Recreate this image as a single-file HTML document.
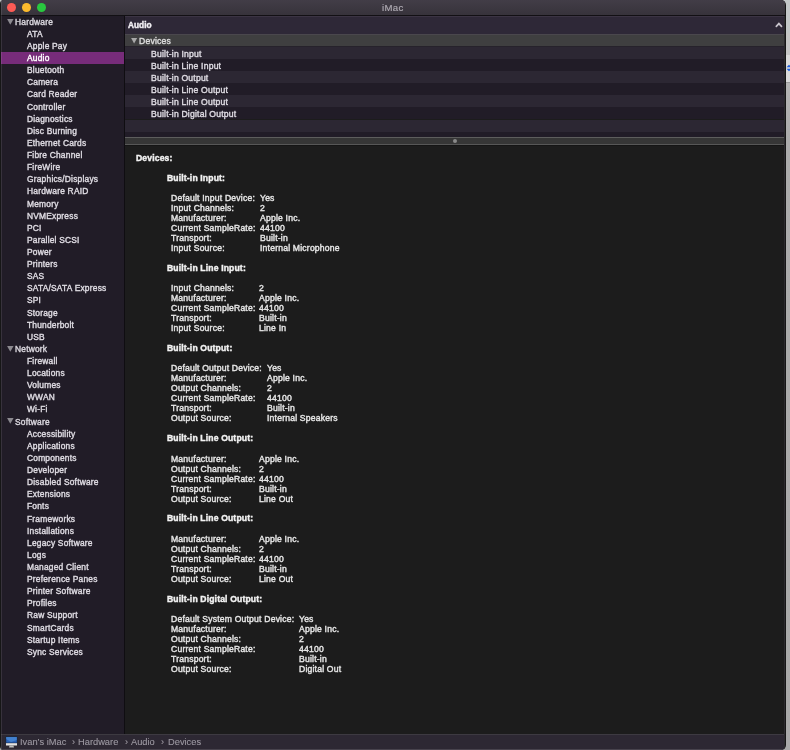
<!DOCTYPE html><html><head><meta charset="utf-8"><style>
*{margin:0;padding:0;box-sizing:border-box}
html,body{width:790px;height:750px;overflow:hidden;background:#b3b3b3;font-family:"Liberation Sans",sans-serif}
.t{position:absolute;white-space:nowrap;will-change:transform;-webkit-text-stroke:0.4px currentColor}
#bg{position:absolute;left:0;top:0;width:790px;height:750px;background:linear-gradient(#c3c7c8 0,#c3c7c8 33px,#c6c6c6 33px,#c6c6c6 55px,#dadada 55px,#dadada 82px,#9c9c9c 82px,#9c9c9c 83px,#b4b4b4 83px,#acacac 140px,#a9a9a9)}
#blue{position:absolute;left:786px;top:63.5px;width:6px;height:8px}
#win{position:absolute;left:0;top:0;width:786px;height:750px;background:#161616;border-radius:4px 5px 5px 4px;overflow:hidden}
#lb{position:absolute;left:1px;top:0;width:1px;height:750px;background:rgba(210,210,210,0.12);z-index:5}
#title{position:absolute;left:1px;top:0;width:784px;height:15px;background:linear-gradient(#423d47,#37333b)}
#tline{position:absolute;left:0;top:15px;width:786px;height:1px;background:#121014}
.dot{position:absolute;top:2.85px;width:9.3px;height:9.3px;border-radius:50%}
#ttl{left:381.2px;top:1px;font-size:9.6px;letter-spacing:0.35px;line-height:13px;color:#b0acb4;-webkit-text-stroke:0.15px currentColor}
#side{position:absolute;left:1px;top:16px;width:123px;height:718px;background:#211c27;overflow:hidden}
#sdiv{position:absolute;left:124px;top:16px;width:1px;height:718px;background:#0f0d11}
.sr{position:absolute;left:0px;width:123px;height:12.115px}
.sr.sel{background:linear-gradient(transparent 0.3px,#772c7a 0.3px,#772c7a 11.9px,transparent 11.9px)}
.sr .t{left:26.2px;top:0.2px;line-height:12.115px;font-size:8.4px;letter-spacing:0.22px;color:#dedbe2}
.sr.sel .t{color:#fff}
.sr.hd .t{left:14.2px;color:#d9d6dd}
.tri{position:absolute}
#right{position:absolute;left:125px;top:16px;width:659px;height:718px;background:#1c1c1c;overflow:hidden}
#hdr{position:absolute;left:0;top:0;width:659px;height:18px;background:#2e2837;border-top:1px solid #3b3443}
#hdr .t{left:2.7px;top:2.2px;font-size:8.3px;line-height:12px;color:#f2f0f4;font-weight:bold}
#devrow{position:absolute;left:0;top:18px;width:659px;height:12.6px;background:#3f3f40;border-top:1px solid #4a474d;border-bottom:1px solid #26222b}
#devrow .t{left:13.9px;top:1px;line-height:11px;font-size:8.6px;letter-spacing:0.2px;color:#dcdcdc}
.tr{position:absolute;left:0;width:659px;height:12.15px}
.tr .t{left:26.4px;top:1.0px;line-height:12.115px;font-size:8.6px;letter-spacing:0.2px;color:#dedbe2}
.tr.l{background:#2c2733}
.tr.d{background:#211c27}
#spl{position:absolute;left:0;top:120.6px;width:659px;height:8.4px;background:#363636;border-top:1.4px solid #5d5d5d;border-bottom:1.6px solid #575757}
#knob{position:absolute;left:327.6px;top:122.6px;width:4.6px;height:4.6px;border-radius:50%;background:#8a8a8a}
.ct{font-size:8.6px;letter-spacing:0.2px;line-height:10.02px;color:#e6e6e6}
.ct.b{font-weight:bold;font-size:8.6px;letter-spacing:0.15px;color:#f2f2f2}
#path{position:absolute;left:1px;top:734px;width:783px;height:16px;background:#2d2833;border-top:1px solid #3d3a41;border-bottom:1px solid #48434d}
.pt{top:1px;font-size:9.3px;line-height:13px;color:#9d99a2;-webkit-text-stroke:0.1px currentColor}
#chev{position:absolute;left:649px;top:3.4px}
</style></head><body>
<div id="bg"></div><svg id="blue" width="6" height="8"><path d="M0.5 3.2 L3 0.8 L5.5 3.2Z M0.5 4.8 L3 7.2 L5.5 4.8Z" fill="#1f5fe0"/></svg>
<div id="win">
<div id="title"><div class="dot" style="left:5.75px;background:#fd5b55"></div><div class="dot" style="left:20.75px;background:#fdbb2d"></div><div class="dot" style="left:35.95px;background:#29c83f"></div><div class="t" id="ttl">iMac</div></div>
<div id="tline"></div><div id="lb"></div><div style="position:absolute;left:784px;top:16px;width:1px;height:734px;background:#2c2a2e;z-index:5"></div>
<div id="side">
<div class="sr hd" style="top:-0.400px"><svg class="tri" style="left:5.9px;top:3.0px" width="7.6" height="6.8"><path d="M0.1 0.1 L6.6 0.1 L3.3 5.8Z" fill="#8c8a90"/></svg><div class="t">Hardware</div></div>
<div class="sr" style="top:11.715px"><div class="t">ATA</div></div>
<div class="sr" style="top:23.830px"><div class="t">Apple Pay</div></div>
<div class="sr sel" style="top:35.945px"><div class="t">Audio</div></div>
<div class="sr" style="top:48.060px"><div class="t">Bluetooth</div></div>
<div class="sr" style="top:60.175px"><div class="t">Camera</div></div>
<div class="sr" style="top:72.290px"><div class="t">Card Reader</div></div>
<div class="sr" style="top:84.405px"><div class="t">Controller</div></div>
<div class="sr" style="top:96.520px"><div class="t">Diagnostics</div></div>
<div class="sr" style="top:108.635px"><div class="t">Disc Burning</div></div>
<div class="sr" style="top:120.750px"><div class="t">Ethernet Cards</div></div>
<div class="sr" style="top:132.865px"><div class="t">Fibre Channel</div></div>
<div class="sr" style="top:144.980px"><div class="t">FireWire</div></div>
<div class="sr" style="top:157.095px"><div class="t">Graphics/Displays</div></div>
<div class="sr" style="top:169.210px"><div class="t">Hardware RAID</div></div>
<div class="sr" style="top:181.325px"><div class="t">Memory</div></div>
<div class="sr" style="top:193.440px"><div class="t">NVMExpress</div></div>
<div class="sr" style="top:205.555px"><div class="t">PCI</div></div>
<div class="sr" style="top:217.670px"><div class="t">Parallel SCSI</div></div>
<div class="sr" style="top:229.785px"><div class="t">Power</div></div>
<div class="sr" style="top:241.900px"><div class="t">Printers</div></div>
<div class="sr" style="top:254.015px"><div class="t">SAS</div></div>
<div class="sr" style="top:266.130px"><div class="t">SATA/SATA Express</div></div>
<div class="sr" style="top:278.245px"><div class="t">SPI</div></div>
<div class="sr" style="top:290.360px"><div class="t">Storage</div></div>
<div class="sr" style="top:302.475px"><div class="t">Thunderbolt</div></div>
<div class="sr" style="top:314.590px"><div class="t">USB</div></div>
<div class="sr hd" style="top:326.705px"><svg class="tri" style="left:5.9px;top:3.0px" width="7.6" height="6.8"><path d="M0.1 0.1 L6.6 0.1 L3.3 5.8Z" fill="#8c8a90"/></svg><div class="t">Network</div></div>
<div class="sr" style="top:338.820px"><div class="t">Firewall</div></div>
<div class="sr" style="top:350.935px"><div class="t">Locations</div></div>
<div class="sr" style="top:363.050px"><div class="t">Volumes</div></div>
<div class="sr" style="top:375.165px"><div class="t">WWAN</div></div>
<div class="sr" style="top:387.280px"><div class="t">Wi-Fi</div></div>
<div class="sr hd" style="top:399.395px"><svg class="tri" style="left:5.9px;top:3.0px" width="7.6" height="6.8"><path d="M0.1 0.1 L6.6 0.1 L3.3 5.8Z" fill="#8c8a90"/></svg><div class="t">Software</div></div>
<div class="sr" style="top:411.510px"><div class="t">Accessibility</div></div>
<div class="sr" style="top:423.625px"><div class="t">Applications</div></div>
<div class="sr" style="top:435.740px"><div class="t">Components</div></div>
<div class="sr" style="top:447.855px"><div class="t">Developer</div></div>
<div class="sr" style="top:459.970px"><div class="t">Disabled Software</div></div>
<div class="sr" style="top:472.085px"><div class="t">Extensions</div></div>
<div class="sr" style="top:484.200px"><div class="t">Fonts</div></div>
<div class="sr" style="top:496.315px"><div class="t">Frameworks</div></div>
<div class="sr" style="top:508.430px"><div class="t">Installations</div></div>
<div class="sr" style="top:520.545px"><div class="t">Legacy Software</div></div>
<div class="sr" style="top:532.660px"><div class="t">Logs</div></div>
<div class="sr" style="top:544.775px"><div class="t">Managed Client</div></div>
<div class="sr" style="top:556.890px"><div class="t">Preference Panes</div></div>
<div class="sr" style="top:569.005px"><div class="t">Printer Software</div></div>
<div class="sr" style="top:581.120px"><div class="t">Profiles</div></div>
<div class="sr" style="top:593.235px"><div class="t">Raw Support</div></div>
<div class="sr" style="top:605.350px"><div class="t">SmartCards</div></div>
<div class="sr" style="top:617.465px"><div class="t">Startup Items</div></div>
<div class="sr" style="top:629.580px"><div class="t">Sync Services</div></div>
</div><div id="sdiv"></div>
<div id="right">
<div id="hdr"><div class="t">Audio</div><svg id="chev" width="10" height="8"><polyline points="2.3,6.4 4.9,3.6 7.5,6.4" fill="none" stroke="#c8c4cc" stroke-width="1.7" stroke-linecap="round"/></svg></div>
<div id="devrow"><svg class="tri" style="left:5.8px;top:3.0px" width="7.2" height="6.4"><path d="M0.1 0.1 L6.2 0.1 L3.1 5.4Z" fill="#a9a9a9"/></svg><div class="t">Devices</div></div>
<div class="tr l" style="top:30.600px"><div class="t">Built-in Input</div></div>
<div class="tr d" style="top:42.750px"><div class="t">Built-in Line Input</div></div>
<div class="tr l" style="top:54.900px"><div class="t">Built-in Output</div></div>
<div class="tr d" style="top:67.050px"><div class="t">Built-in Line Output</div></div>
<div class="tr l" style="top:79.200px"><div class="t">Built-in Line Output</div></div>
<div class="tr d" style="top:91.350px"><div class="t">Built-in Digital Output</div></div>
<div class="tr l" style="top:103.500px"><div class="t"></div></div>
<div class="tr d" style="top:115.650px"><div class="t"></div></div>
<div id="spl"></div><div id="knob"></div><div style="position:absolute;left:0;top:129px;width:659px;height:1px;background:#151515"></div>
<div class="t ct b" style="left:10.70px;top:136.65px">Devices:</div>
<div class="t ct b" style="left:41.90px;top:156.69px">Built-in Input:</div>
<div class="t ct" style="left:46.00px;top:177.03px">Default Input Device:</div>
<div class="t ct" style="left:135.30px;top:177.03px">Yes</div>
<div class="t ct" style="left:46.00px;top:187.05px">Input Channels:</div>
<div class="t ct" style="left:135.30px;top:187.05px">2</div>
<div class="t ct" style="left:46.00px;top:197.07px">Manufacturer:</div>
<div class="t ct" style="left:135.30px;top:197.07px">Apple Inc.</div>
<div class="t ct" style="left:46.00px;top:207.09px">Current SampleRate:</div>
<div class="t ct" style="left:135.30px;top:207.09px">44100</div>
<div class="t ct" style="left:46.00px;top:217.11px">Transport:</div>
<div class="t ct" style="left:135.30px;top:217.11px">Built-in</div>
<div class="t ct" style="left:46.00px;top:227.13px">Input Source:</div>
<div class="t ct" style="left:135.30px;top:227.13px">Internal Microphone</div>
<div class="t ct b" style="left:41.90px;top:246.87px">Built-in Line Input:</div>
<div class="t ct" style="left:46.00px;top:267.21px">Input Channels:</div>
<div class="t ct" style="left:134.30px;top:267.21px">2</div>
<div class="t ct" style="left:46.00px;top:277.23px">Manufacturer:</div>
<div class="t ct" style="left:134.30px;top:277.23px">Apple Inc.</div>
<div class="t ct" style="left:46.00px;top:287.25px">Current SampleRate:</div>
<div class="t ct" style="left:134.30px;top:287.25px">44100</div>
<div class="t ct" style="left:46.00px;top:297.27px">Transport:</div>
<div class="t ct" style="left:134.30px;top:297.27px">Built-in</div>
<div class="t ct" style="left:46.00px;top:307.29px">Input Source:</div>
<div class="t ct" style="left:134.30px;top:307.29px">Line In</div>
<div class="t ct b" style="left:41.90px;top:327.03px">Built-in Output:</div>
<div class="t ct" style="left:46.00px;top:347.37px">Default Output Device:</div>
<div class="t ct" style="left:142.40px;top:347.37px">Yes</div>
<div class="t ct" style="left:46.00px;top:357.39px">Manufacturer:</div>
<div class="t ct" style="left:142.40px;top:357.39px">Apple Inc.</div>
<div class="t ct" style="left:46.00px;top:367.41px">Output Channels:</div>
<div class="t ct" style="left:142.40px;top:367.41px">2</div>
<div class="t ct" style="left:46.00px;top:377.43px">Current SampleRate:</div>
<div class="t ct" style="left:142.40px;top:377.43px">44100</div>
<div class="t ct" style="left:46.00px;top:387.45px">Transport:</div>
<div class="t ct" style="left:142.40px;top:387.45px">Built-in</div>
<div class="t ct" style="left:46.00px;top:397.47px">Output Source:</div>
<div class="t ct" style="left:142.40px;top:397.47px">Internal Speakers</div>
<div class="t ct b" style="left:41.90px;top:417.21px">Built-in Line Output:</div>
<div class="t ct" style="left:46.00px;top:437.55px">Manufacturer:</div>
<div class="t ct" style="left:134.30px;top:437.55px">Apple Inc.</div>
<div class="t ct" style="left:46.00px;top:447.57px">Output Channels:</div>
<div class="t ct" style="left:134.30px;top:447.57px">2</div>
<div class="t ct" style="left:46.00px;top:457.59px">Current SampleRate:</div>
<div class="t ct" style="left:134.30px;top:457.59px">44100</div>
<div class="t ct" style="left:46.00px;top:467.61px">Transport:</div>
<div class="t ct" style="left:134.30px;top:467.61px">Built-in</div>
<div class="t ct" style="left:46.00px;top:477.63px">Output Source:</div>
<div class="t ct" style="left:134.30px;top:477.63px">Line Out</div>
<div class="t ct b" style="left:41.90px;top:497.37px">Built-in Line Output:</div>
<div class="t ct" style="left:46.00px;top:517.71px">Manufacturer:</div>
<div class="t ct" style="left:134.30px;top:517.71px">Apple Inc.</div>
<div class="t ct" style="left:46.00px;top:527.73px">Output Channels:</div>
<div class="t ct" style="left:134.30px;top:527.73px">2</div>
<div class="t ct" style="left:46.00px;top:537.75px">Current SampleRate:</div>
<div class="t ct" style="left:134.30px;top:537.75px">44100</div>
<div class="t ct" style="left:46.00px;top:547.77px">Transport:</div>
<div class="t ct" style="left:134.30px;top:547.77px">Built-in</div>
<div class="t ct" style="left:46.00px;top:557.79px">Output Source:</div>
<div class="t ct" style="left:134.30px;top:557.79px">Line Out</div>
<div class="t ct b" style="left:41.90px;top:577.53px">Built-in Digital Output:</div>
<div class="t ct" style="left:46.00px;top:597.87px">Default System Output Device:</div>
<div class="t ct" style="left:174.00px;top:597.87px">Yes</div>
<div class="t ct" style="left:46.00px;top:607.89px">Manufacturer:</div>
<div class="t ct" style="left:174.00px;top:607.89px">Apple Inc.</div>
<div class="t ct" style="left:46.00px;top:617.91px">Output Channels:</div>
<div class="t ct" style="left:174.00px;top:617.91px">2</div>
<div class="t ct" style="left:46.00px;top:627.93px">Current SampleRate:</div>
<div class="t ct" style="left:174.00px;top:627.93px">44100</div>
<div class="t ct" style="left:46.00px;top:637.95px">Transport:</div>
<div class="t ct" style="left:174.00px;top:637.95px">Built-in</div>
<div class="t ct" style="left:46.00px;top:647.97px">Output Source:</div>
<div class="t ct" style="left:174.00px;top:647.97px">Digital Out</div>
</div>
<div id="path">
<svg style="position:absolute;left:4.0px;top:1.4px" width="13" height="13" viewBox="0 0 13 13"><rect x="0.6" y="0.6" width="11.8" height="6.6" rx="0.7" fill="#10243f"/><rect x="1.2" y="1.1" width="10.6" height="5.6" fill="#2a62b8"/><path d="M1.2 1.1 L11.8 1.1 L11.8 4 L6 6 L1.2 3Z" fill="#4d8fd8" opacity="0.7"/><rect x="1" y="7.2" width="11" height="2.3" fill="#e4e4e4"/><path d="M4.6 9.5 L8.4 9.5 L9 11.4 L4 11.4Z" fill="#bdbdbd"/></svg>
<div class="t pt" style="left:19.0px">Ivan’s iMac</div>
<div class="t pt" style="left:70.8px">›</div>
<div class="t pt" style="left:77.1px">Hardware</div>
<div class="t pt" style="left:123.6px">›</div>
<div class="t pt" style="left:130.2px">Audio</div>
<div class="t pt" style="left:160.2px">›</div>
<div class="t pt" style="left:166.6px">Devices</div>
</div>
</div>
</body></html>
